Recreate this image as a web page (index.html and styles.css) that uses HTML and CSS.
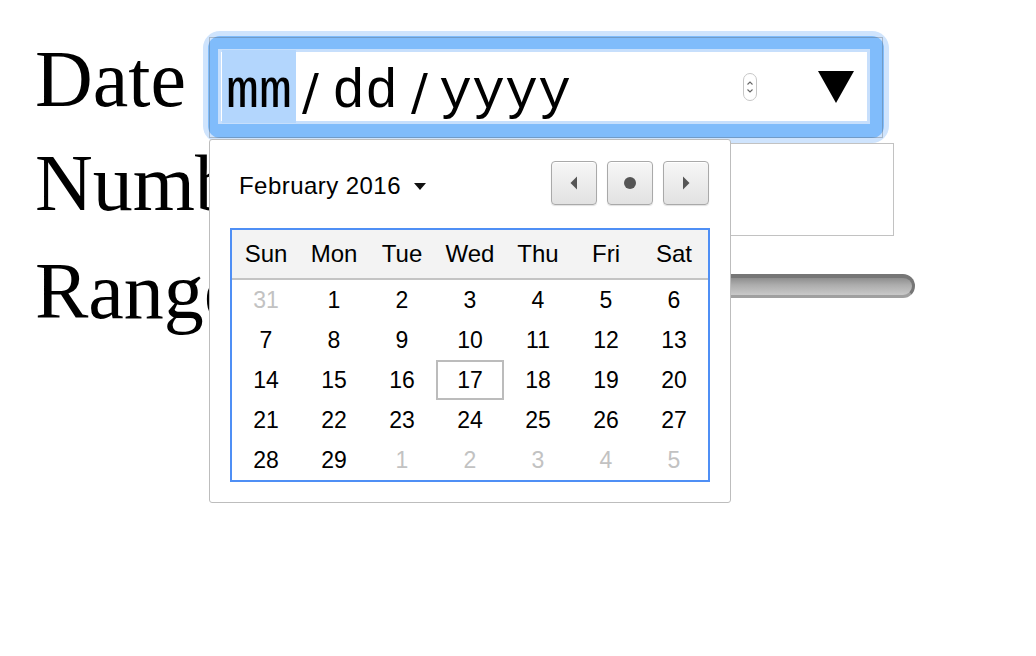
FILE: index.html
```html
<!DOCTYPE html>
<html>
<head>
<meta charset="utf-8">
<title>Date picker</title>
<link rel="stylesheet" href="styles.css">
</head>
<body>
<div class="page">
  <div class="row row-date">
    <span class="label">Date</span>
    <div class="date-input">
      <div class="date-inner">
        <span class="seg seg-sel">mm</span><span class="sep sep1">/</span><span class="seg">dd</span><span class="sep sep2">/</span><span class="seg">yyyy</span>
        <span class="spacer"></span>
        <svg class="spin" width="14" height="28" viewBox="0 0 14 28">
          <rect x="0.5" y="0.5" width="13" height="27" rx="6.5" fill="#fff" stroke="#c6c6c6"/>
          <polyline points="4.5,11.5 7,9 9.5,11.5" fill="none" stroke="#666" stroke-width="1.1"/>
          <polyline points="4.5,16.5 7,19 9.5,16.5" fill="none" stroke="#666" stroke-width="1.1"/>
        </svg>
        <svg class="drop" width="36" height="32" viewBox="0 0 36 32">
          <polygon points="0,0 36,0 18,32" fill="#000"/>
        </svg>
      </div>
    </div>
  </div>
  <div class="row row-number">
    <span class="label">Number</span>
    <div class="number-input"></div>
  </div>
  <div class="row row-range">
    <span class="label label-range">Range</span>
    <div class="range-track"></div>
  </div>

  <div class="picker">
    <div class="picker-head">
      <div class="month">February 2016<span class="month-caret"></span></div>
      <div class="nav">
        <div class="nav-btn"><svg width="8" height="14" viewBox="0 0 8 14"><polygon points="7,0.5 7,13.5 0.5,7" fill="#555"/></svg></div>
        <div class="nav-btn"><span class="dot"></span></div>
        <div class="nav-btn"><svg width="8" height="14" viewBox="0 0 8 14"><polygon points="1,0.5 1,13.5 7.5,7" fill="#555"/></svg></div>
      </div>
    </div>
    <div class="cal">
      <div class="cal-head">
        <span>Sun</span><span>Mon</span><span>Tue</span><span>Wed</span><span>Thu</span><span>Fri</span><span>Sat</span>
      </div>
      <div class="cal-body">
        <span class="out">31</span><span>1</span><span>2</span><span>3</span><span>4</span><span>5</span><span>6</span>
        <span>7</span><span>8</span><span>9</span><span>10</span><span>11</span><span>12</span><span>13</span>
        <span>14</span><span>15</span><span>16</span><span class="today">17</span><span>18</span><span>19</span><span>20</span>
        <span>21</span><span>22</span><span>23</span><span>24</span><span>25</span><span>26</span><span>27</span>
        <span>28</span><span>29</span><span class="out">1</span><span class="out">2</span><span class="out">3</span><span class="out">4</span><span class="out">5</span>
      </div>
    </div>
  </div>
</div>
</body>
</html>
```

FILE: styles.css
```css
* { box-sizing: border-box; }

html, body {
  margin: 0;
  padding: 0;
  background: #fff;
}

.page {
  position: relative;
  width: 1036px;
  height: 656px;
  padding: 36px 0 0 35px;
  font-family: "Liberation Serif", "Times New Roman", serif;
  color: #000;
  overflow: hidden;
}

.row {
  display: flex;
  align-items: flex-start;
  gap: 21px;
}

.label {
  font-size: 80px;
  line-height: 80px;
  white-space: nowrap;
}

/* ---------- date row ---------- */
.row-date { height: 102px; }
.row-date .label { margin-top: 3px; }

.date-input {
  position: relative;
  width: 676px;
  height: 102px;
  margin-left: 1px;
  padding: 13px 14px 14px 10px;
  background: #80bcfb;
  border-radius: 12px;
  box-shadow: 0 0 0 5px #cfe4fd;
}

.date-input::after {
  content: "";
  position: absolute;
  left: 1px;
  top: 1px;
  right: 1px;
  bottom: 0;
  border: 1px solid rgba(80, 80, 80, 0.3);
}

.date-inner {
  width: 100%;
  height: 100%;
  border: 3px solid #c7dffc;
  background: #fff;
  display: flex;
  align-items: center;
  font-family: "Liberation Mono", "Courier New", monospace;
  font-size: 55px;
}

.seg, .sep {
  display: block;
  height: 73px;
  line-height: 61px;
  padding-top: 12px;
  white-space: nowrap;
  flex: none;
}

.sep {
  width: 33px;
  text-align: center;
  font-family: "DejaVu Sans", sans-serif;
  font-size: 50px;
}

.seg-sel {
  background: #b3d6fd;
  margin-left: 1px;
  padding-left: 4px;
  padding-right: 4px;
}

.sep1 { margin-left: -2px; margin-right: 5px; }
.sep2 { margin-left: 5px; margin-right: 3px; }

.spacer { flex: 1; }

.spin { flex: none; margin-right: 61px; display: block; }
.drop { flex: none; margin-right: 13px; display: block; }

/* ---------- number row ---------- */
.row-number { margin-top: 5px; height: 93px; }

.number-input {
  width: 576px;
  height: 93px;
  border: 1px solid #c2c2c2;
  background: #fff;
}

/* ---------- range row ---------- */
.label-range { margin-top: 15px; }

.range-track {
  width: 655px;
  height: 24px;
  margin-top: 38px;
  border-radius: 12px;
  border: 3px solid #767676;
  border-top-width: 4px;
  border-bottom-color: #a0a0a0;
  background: linear-gradient(to bottom, #8e8e8e 0%, #acacac 40%, #c9c9c9 100%);
}

/* ---------- picker popup ---------- */
.picker {
  position: absolute;
  left: 209px;
  top: 139px;
  width: 522px;
  height: 364px;
  padding: 21px 20px 20px 20px;
  background: #fff;
  border: 1px solid #bdbdbd;
  border-radius: 3px;
  font-family: "Liberation Sans", Arial, sans-serif;
  z-index: 2;
}

.picker-head {
  height: 44px;
  margin-bottom: 23px;
  display: flex;
  align-items: center;
  justify-content: space-between;
}

.month {
  margin-left: 9px;
  margin-top: 5px;
  font-size: 24px;
  letter-spacing: 0.45px;
  display: flex;
  align-items: center;
  white-space: nowrap;
}

.month-caret {
  display: block;
  width: 0;
  height: 0;
  margin-left: 13px;
  margin-top: 1px;
  border-left: 6px solid transparent;
  border-right: 6px solid transparent;
  border-top: 7px solid #111;
}

.nav {
  display: flex;
  gap: 10px;
  margin-right: 1px;
}

.nav-btn {
  width: 46px;
  height: 44px;
  border: 1px solid #a9a9a9;
  border-radius: 4px;
  background: linear-gradient(to bottom, #f7f7f7 0%, #e2e2e2 100%);
  box-shadow: 0 1px 1px rgba(0, 0, 0, 0.12), inset 0 1px 0 #fff;
  display: flex;
  align-items: center;
  justify-content: center;
}

.nav-btn svg { display: block; }

.dot {
  display: block;
  width: 12px;
  height: 12px;
  border-radius: 50%;
  background: #555;
}

.cal {
  width: 480px;
  border: 2px solid #4f8ff5;
}

.cal-head {
  display: grid;
  grid-template-columns: repeat(7, 68px);
  height: 50px;
  background: #f3f3f3;
  border-bottom: 2px solid #c4c4c4;
  font-size: 24px;
}

.cal-head span {
  text-align: center;
  line-height: 48px;
}

.cal-body {
  display: grid;
  grid-template-columns: repeat(7, 68px);
  grid-auto-rows: 40px;
  font-size: 23px;
}

.cal-body span {
  text-align: center;
  line-height: 40px;
}

.cal-body .out { color: #c2c2c2; }

.cal-body .today {
  border: 2px solid #bcbcbc;
  line-height: 36px;
}
```
